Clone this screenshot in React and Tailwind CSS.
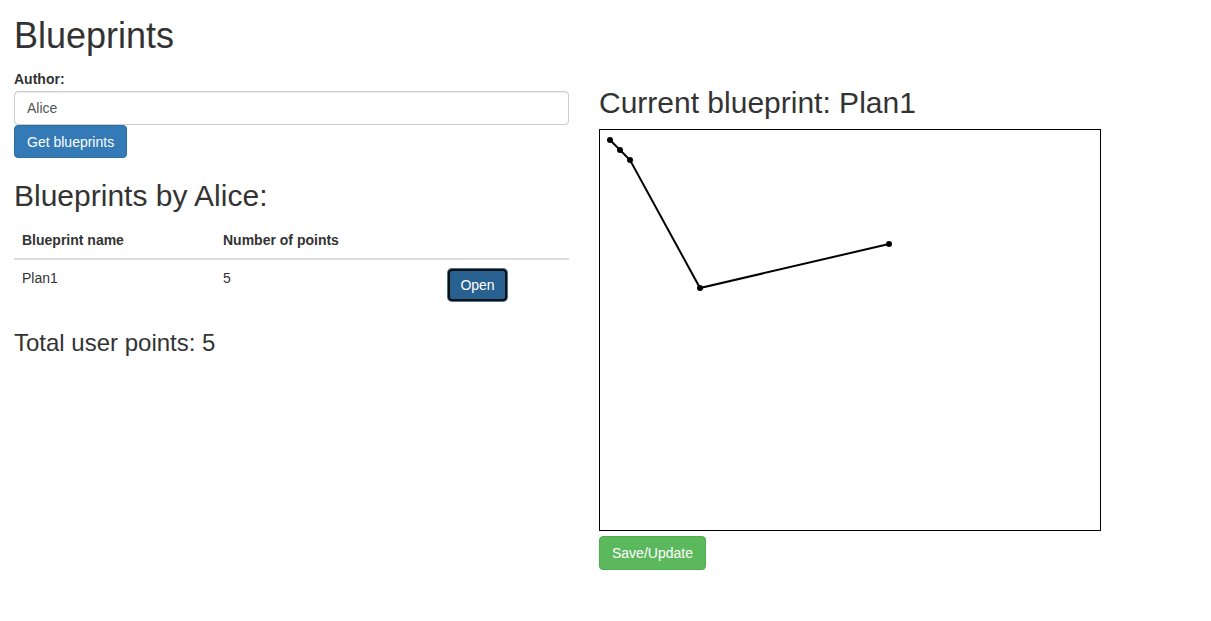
import React from 'react';

const points = [
  [10, 10],
  [20, 20],
  [30, 30],
  [100, 158],
  [289, 114],
];

const blueprints = [{ name: 'Plan1', points: 5 }];

const BlueprintCanvas = () => (
  <div className="w-[502px] h-[402px] border border-black bg-white">
    <svg width="500" height="400" viewBox="0 0 500 400">
      <polyline
        points={points.map(p => p.join(',')).join(' ')}
        fill="none"
        stroke="#000"
        strokeWidth="2"
      />
      {points.map(([x, y], i) => (
        <circle key={i} cx={x} cy={y} r="3" fill="#000" />
      ))}
    </svg>
  </div>
);

const App = () => {
  const author = 'Alice';
  const total = blueprints.reduce((acc, b) => acc + b.points, 0);

  return (
    <div className="min-h-[621px] bg-white text-[#333] font-['Liberation_Sans',Arial,sans-serif] text-[14px] leading-[20px]">
      <div className="flex pl-[14px]">
        {/* left column */}
        <div className="w-[555px] shrink-0">
          <h1 className="text-[36px] leading-[40px] mt-[16px] mb-[13px]">Blueprints</h1>
          <label className="block font-bold mb-[2px]">Author:</label>
          <input
            defaultValue={author}
            className="block w-full h-[34px] px-[12px] border border-[#ccc] rounded-[4px] text-[#555] shadow-[inset_0_1px_1px_rgba(0,0,0,0.075)] outline-none"
          />
          <button className="h-[33px] px-[12px] bg-[#337ab7] border border-[#2e6da4] rounded-[4px] text-white">
            Get blueprints
          </button>

          <h2 className="text-[30px] leading-[33px] mt-[21px] mb-[10px]">Blueprints by {author}:</h2>
          <table className="w-full border-collapse">
            <thead>
              <tr className="border-b-2 border-[#ddd]">
                <th className="w-[201px] text-left font-bold p-[8px]">Blueprint name</th>
                <th className="w-[224px] text-left font-bold p-[8px]">Number of points</th>
                <th className="p-[8px]"></th>
              </tr>
            </thead>
            <tbody>
              {blueprints.map(b => (
                <tr key={b.name}>
                  <td className="p-[8px] align-top">{b.name}</td>
                  <td className="p-[8px] align-top">{b.points}</td>
                  <td className="p-[8px] align-top">
                    <button className="w-[59px] h-[32px] mt-[1px] ml-[1px] bg-[#286090] border-2 border-[#111] rounded-[4px] text-white ring-1 ring-[#4a7298]">
                      Open
                    </button>
                  </td>
                </tr>
              ))}
            </tbody>
          </table>
          <h3 className="text-[24px] leading-[26px] mt-[21px]">Total user points: {total}</h3>
        </div>

        {/* right column */}
        <div className="ml-[30px]">
          <h2 className="text-[30px] leading-[33px] mt-[86px] mb-[10px]">Current blueprint: Plan1</h2>
          <BlueprintCanvas />
          <button className="mt-[5px] h-[34px] px-[12px] bg-[#5cb85c] border border-[#4cae4c] rounded-[4px] text-white">
            Save/Update
          </button>
        </div>
      </div>
    </div>
  );
};

export default App;
